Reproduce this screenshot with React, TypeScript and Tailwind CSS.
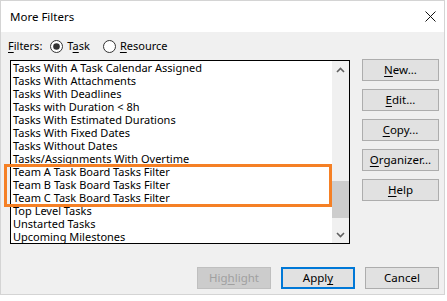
import React from 'react';

const font = { fontFamily: '"Segoe UI", "Noto Sans", sans-serif' };

const filters = [
  'Tasks With A Task Calendar Assigned',
  'Tasks With Attachments',
  'Tasks With Deadlines',
  'Tasks with Duration < 8h',
  'Tasks With Estimated Durations',
  'Tasks With Fixed Dates',
  'Tasks Without Dates',
  'Tasks/Assignments With Overtime',
  'Team A Task Board Tasks Filter',
  'Team B Task Board Tasks Filter',
  'Team C Task Board Tasks Filter',
  'Top Level Tasks',
  'Unstarted Tasks',
  'Upcoming Milestones',
];

// label with one underlined access key
const Key = ({ text, at }: { text: string; at: number }) => (
  <span>
    {text.slice(0, at)}
    <span className="underline underline-offset-2">{text[at]}</span>
    {text.slice(at + 1)}
  </span>
);

const Radio = ({ checked }: { checked?: boolean }) => (
  <svg width="13" height="13" viewBox="0 0 13 13">
    <circle cx="6.5" cy="6.5" r="6" fill="white" stroke="#333" strokeWidth="1" />
    {checked && <circle cx="6.5" cy="6.5" r="3.3" fill="#333" />}
  </svg>
);

const SideButton = ({ children }: { children: React.ReactNode }) => (
  <button className="w-[77px] h-[22px] bg-[#e1e1e1] border border-[#adadad] text-[11.5px] text-black flex items-center justify-center">
    {children}
  </button>
);

export default function App() {
  return (
    <div className="w-[447px] h-[301px] bg-white text-black text-[11px]" style={font}>
      <div className="relative w-[445px] h-[295px] border border-[#d4d4d4] bg-[#f0f0f0] flex flex-col">
        {/* title bar */}
        <div className="h-[31px] bg-white flex items-center justify-between pl-[9px] pr-[8px]">
          <span className="text-[11.5px]">More Filters</span>
          <svg width="11" height="11" viewBox="0 0 11 11">
            <path d="M0.5 0.5 L10.5 10.5 M10.5 0.5 L0.5 10.5" stroke="#111" strokeWidth="1" />
          </svg>
        </div>

        <div className="flex">
          <div className="flex flex-col">
            <div className="h-[28px] flex items-center pl-[7px] pt-[1px] text-[11px]">
              <Key text="Filters:" at={0} />
              <span className="ml-[8px] flex items-center gap-[4px]">
                <Radio checked />
                <Key text="Task" at={1} />
              </span>
              <span className="ml-[13px] flex items-center gap-[4px]">
                <Radio />
                <Key text="Resource" at={0} />
              </span>
            </div>
            <div className="ml-[9px] w-[340px] h-[184px] border border-black bg-white flex">
              <div className="flex-1 overflow-hidden">
                {filters.map((f) => (
                  <div key={f} className="h-[13px] leading-[13px] pl-[2px] whitespace-nowrap">
                    {f}
                  </div>
                ))}
              </div>
              <div className="w-[17px] bg-[#f0f0f0] flex flex-col">
                <div className="h-[17px] flex items-center justify-center">
                  <svg width="9" height="6" viewBox="0 0 9 6">
                    <path d="M1 5 L4.5 1.5 L8 5" fill="none" stroke="#606060" strokeWidth="1.6" />
                  </svg>
                </div>
                <div className="flex-1 pt-[103px]">
                  <div className="h-[37px] bg-[#cdcdcd]" />
                </div>
                <div className="h-[17px] flex items-center justify-center">
                  <svg width="9" height="6" viewBox="0 0 9 6">
                    <path d="M1 1 L4.5 4.5 L8 1" fill="none" stroke="#606060" strokeWidth="1.6" />
                  </svg>
                </div>
              </div>
            </div>
          </div>

          <div className="ml-[12px] pt-[27px] flex flex-col gap-[8px]">
            <SideButton><Key text="New..." at={0} /></SideButton>
            <SideButton><Key text="Edit..." at={0} /></SideButton>
            <SideButton><Key text="Copy..." at={0} /></SideButton>
            <SideButton><Key text="Organizer..." at={0} /></SideButton>
            <SideButton><Key text="Help" at={0} /></SideButton>
          </div>
        </div>

        <div className="mt-[23px] flex justify-end gap-[10px] pr-[5px] text-[11.5px]">
          <button className="w-[74px] h-[22px] bg-[#cccccc] border border-[#bfbfbf] text-[#a0a0a0] flex items-center justify-center">
            <Key text="Highlight" at={3} />
          </button>
          <button className="w-[74px] h-[22px] bg-[#e1e1e1] border-2 border-[#0078d7] flex items-center justify-center">
            <Key text="Apply" at={4} />
          </button>
          <button className="w-[74px] h-[22px] bg-[#e1e1e1] border border-[#adadad] flex items-center justify-center">
            Cancel
          </button>
        </div>

        {/* annotation box */}
        <div className="absolute left-[3px] top-[163px] w-[328px] h-[43px] border-[3px] border-[#f58025]" />
      </div>
    </div>
  );
}
